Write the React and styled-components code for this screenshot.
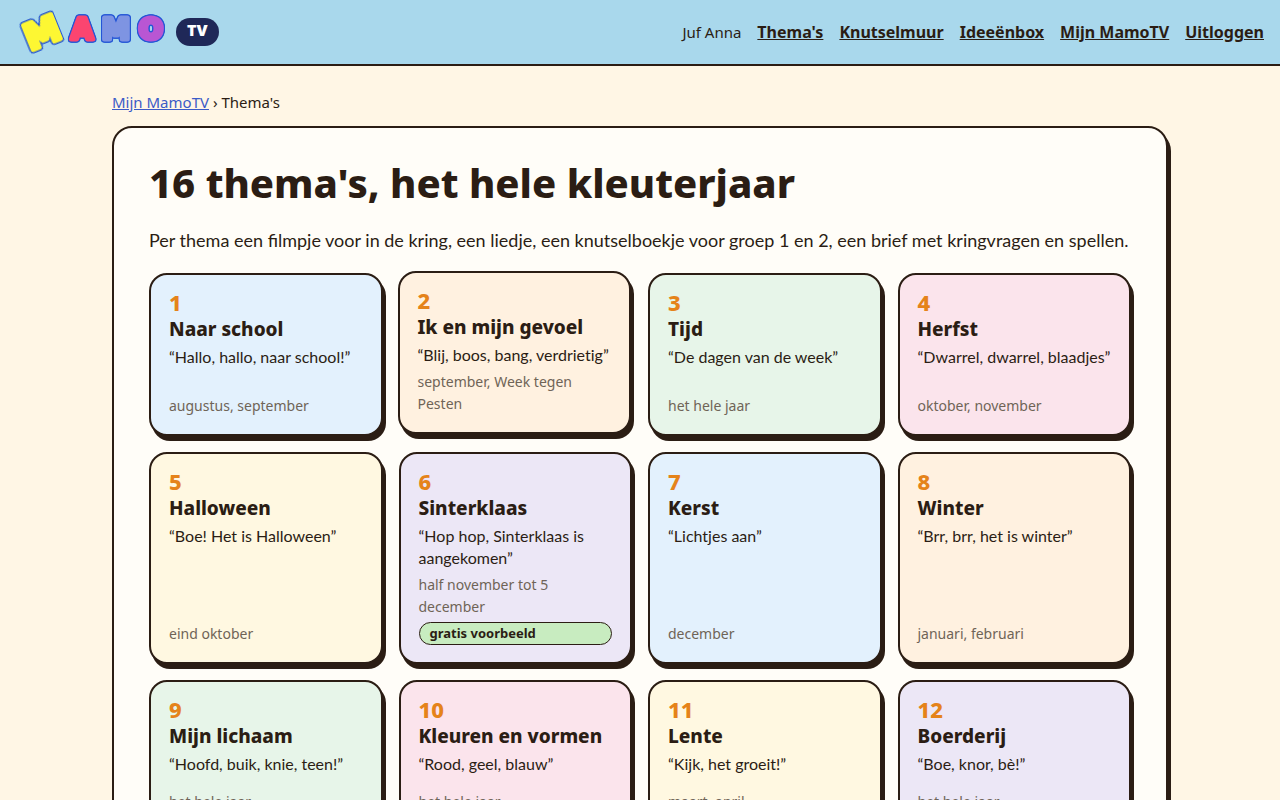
import styled, { createGlobalStyle, ThemeProvider } from 'styled-components';
import React from 'react';

const theme = {
  ink: '#2b1d14',
  muted: '#6f6457',
  sky: '#a9d8ec',
  cream: '#fff6e5',
  paper: '#fffdf8',
  orange: '#e5831a',
  link: '#3b5bc7',
  body: "'Noto Sans', 'Open Sans', sans-serif",
  soft: "Lato, 'Noto Sans', sans-serif",
};

const GlobalStyle = createGlobalStyle`
  *, *::before, *::after {
    box-sizing: border-box;
  }

  body {
    margin: 0;
    background: ${theme.cream};
    color: ${theme.ink};
    font-family: ${theme.body};
    font-size: 16px;
    line-height: 24px;
  }
`;

// Top bar
const Header = styled.header`
  display: flex;
  align-items: center;
  justify-content: space-between;
  min-height: 66px;
  padding: 0 16px;
  background: ${({ theme }) => theme.sky};
  border-bottom: 2px solid ${({ theme }) => theme.ink};
`;

const Brand = styled.a`
  display: flex;
  align-items: center;
  gap: 6px;
  text-decoration: none;
`;

const LogoArt = styled.svg`
  display: block;
  width: 154px;
  height: 44px;
  overflow: visible;
`;

// Plump letter with a thin blue line round it
const Letter = styled.text`
  font-family: 'DejaVu Sans', sans-serif;
  font-size: ${({ $size }) => $size}px;
  font-weight: 700;
  text-anchor: middle;
  stroke-linejoin: round;
  stroke-width: 5px;
  fill: ${({ $color }) => $color};
  stroke: ${({ $color }) => $color};
  filter: drop-shadow(1px 0 0 #2456d6) drop-shadow(-1px 0 0 #2456d6) drop-shadow(0 1px 0 #2456d6)
    drop-shadow(0 -1px 0 #2456d6);
`;

const TvBadge = styled.span`
  padding: 0 11px 4px;
  border-radius: 14px;
  background: #1f2858;
  color: #fff;
  font-size: 16px;
  font-weight: 900;
  line-height: 24px;
`;

const Nav = styled.nav`
  display: flex;
  align-items: center;
  gap: 16px;
`;

const UserName = styled.span`
  font-size: 15px;
`;

const NavLink = styled.a`
  color: inherit;
  font-weight: 700;
`;

// Page body
const Main = styled.main`
  max-width: 1088px;
  margin: 0 auto;
  padding: 24px 16px;
`;

const Breadcrumb = styled.nav`
  margin-bottom: 11px;
  font-size: 15px;
  line-height: 25px;

  a {
    color: ${({ theme }) => theme.link};
  }
`;

const Panel = styled.section`
  padding: 32px 35px;
  background: ${({ theme }) => theme.paper};
  border: 2px solid ${({ theme }) => theme.ink};
  border-radius: 20px;
  box-shadow: 3px 5px 0 ${({ theme }) => theme.ink};
`;

const Title = styled.h1`
  margin: 0 0 21px;
  font-size: 40px;
  font-weight: 800;
  line-height: 46px;
`;

const Intro = styled.p`
  margin: 0 0 19px;
  font-family: ${({ theme }) => theme.soft};
  font-size: 18px;
  line-height: 27px;
`;

const Grid = styled.div`
  display: grid;
  grid-template-columns: repeat(auto-fill, minmax(220px, 1fr));
  gap: 16px;
`;

// One theme in the overview
const Card = styled.a`
  display: flex;
  flex-direction: column;
  gap: 5px;
  min-height: 152px;
  padding: 17px 18px;
  background: ${({ $color }) => $color};
  border: 2px solid ${({ theme }) => theme.ink};
  border-radius: 18px;
  box-shadow: 3px 5px 0 ${({ theme }) => theme.ink};
  color: inherit;
  text-decoration: none;
  transform: ${({ $raised }) => ($raised ? 'translate(-1px, -2px)' : 'none')};
`;

const Number = styled.span`
  color: ${({ theme }) => theme.orange};
  font-size: 22px;
  font-weight: 800;
  line-height: 20px;
`;

const CardTitle = styled.h2`
  margin: 0;
  font-size: 19px;
  font-weight: 800;
  line-height: 24px;
`;

const Song = styled.span`
  font-family: ${({ theme }) => theme.soft};
  font-size: 16px;
  font-variant-ligatures: none;
  line-height: 22px;
`;

const CardFooter = styled.span`
  display: flex;
  flex-direction: column;
  gap: 4px;
  margin-top: auto;
`;

const Period = styled.span`
  color: ${({ theme }) => theme.muted};
  font-size: 14px;
  line-height: 22px;
`;

const FreeTag = styled.span`
  padding: 0 10px;
  background: #c8ecc0;
  border: 1px solid ${({ theme }) => theme.ink};
  border-radius: 12px;
  font-size: 13px;
  font-weight: 700;
  line-height: 21px;
`;

const blue = '#e3f1fd';
const peach = '#fff1e0';
const green = '#e7f5e9';
const pink = '#fbe4ec';
const yellow = '#fff8e1';
const purple = '#ece7f6';

const themes = [
  { title: 'Naar school', song: 'Hallo, hallo, naar school!', period: 'augustus, september', color: blue },
  { title: 'Ik en mijn gevoel', song: 'Blij, boos, bang, verdrietig', period: 'september, Week tegen Pesten', color: peach, raised: true },
  { title: 'Tijd', song: 'De dagen van de week', period: 'het hele jaar', color: green },
  { title: 'Herfst', song: 'Dwarrel, dwarrel, blaadjes', period: 'oktober, november', color: pink },
  { title: 'Halloween', song: 'Boe! Het is Halloween', period: 'eind oktober', color: yellow },
  { title: 'Sinterklaas', song: 'Hop hop, Sinterklaas is aangekomen', period: 'half november tot 5 december', color: purple, free: true },
  { title: 'Kerst', song: 'Lichtjes aan', period: 'december', color: blue },
  { title: 'Winter', song: 'Brr, brr, het is winter', period: 'januari, februari', color: peach },
  { title: 'Mijn lichaam', song: 'Hoofd, buik, knie, teen!', period: 'het hele jaar', color: green },
  { title: 'Kleuren en vormen', song: 'Rood, geel, blauw', period: 'het hele jaar', color: pink },
  { title: 'Lente', song: 'Kijk, het groeit!', period: 'maart, april', color: yellow },
  { title: 'Boerderij', song: 'Boe, knor, bè!', period: 'het hele jaar', color: purple },
];

const letters = [
  { char: 'A', color: '#fb4570', size: 28, place: 'translate(66 29)' },
  { char: 'M', color: '#7e94e2', size: 28, place: 'translate(100 29)' },
  { char: 'O', color: '#b956d3', size: 28, place: 'translate(135 29)' },
  { char: 'M', color: '#fdf733', size: 36, place: 'rotate(-22 26 22) translate(26 35)' },
];

const links = ["Thema's", 'Knutselmuur', 'Ideeënbox', 'Mijn MamoTV', 'Uitloggen'];

const Logo = () => (
  <Brand href="#">
    <LogoArt viewBox="0 0 154 44">
      {letters.map(({ char, color, size, place }) => (
        <Letter key={place} transform={place} $size={size} $color={color}>{char}</Letter>
      ))}
    </LogoArt>
    <TvBadge>TV</TvBadge>
  </Brand>
);

const ThemeCard = ({ number, title, song, period, color, raised, free }) => (
  <Card href="#" $color={color} $raised={raised}>
    <Number>{number}</Number>
    <CardTitle>{title}</CardTitle>
    <Song>{`“${song}”`}</Song>
    <CardFooter>
      <Period>{period}</Period>
      {free && <FreeTag>gratis voorbeeld</FreeTag>}
    </CardFooter>
  </Card>
);

const App = () => (
  <ThemeProvider theme={theme}>
    <GlobalStyle />
    <Header>
      <Logo />
      <Nav>
        <UserName>Juf Anna</UserName>
        {links.map((link) => (
          <NavLink key={link} href="#">{link}</NavLink>
        ))}
      </Nav>
    </Header>
    <Main>
      <Breadcrumb>
        <a href="#">Mijn MamoTV</a> › Thema's
      </Breadcrumb>
      <Panel>
        <Title>16 thema's, het hele kleuterjaar</Title>
        <Intro>
          Per thema een filmpje voor in de kring, een liedje, een knutselboekje voor groep 1 en 2, een brief met
          kringvragen en spellen.
        </Intro>
        <Grid>
          {themes.map((item, index) => (
            <ThemeCard key={item.title} number={index + 1} {...item} />
          ))}
        </Grid>
      </Panel>
    </Main>
  </ThemeProvider>
);

export default App;
